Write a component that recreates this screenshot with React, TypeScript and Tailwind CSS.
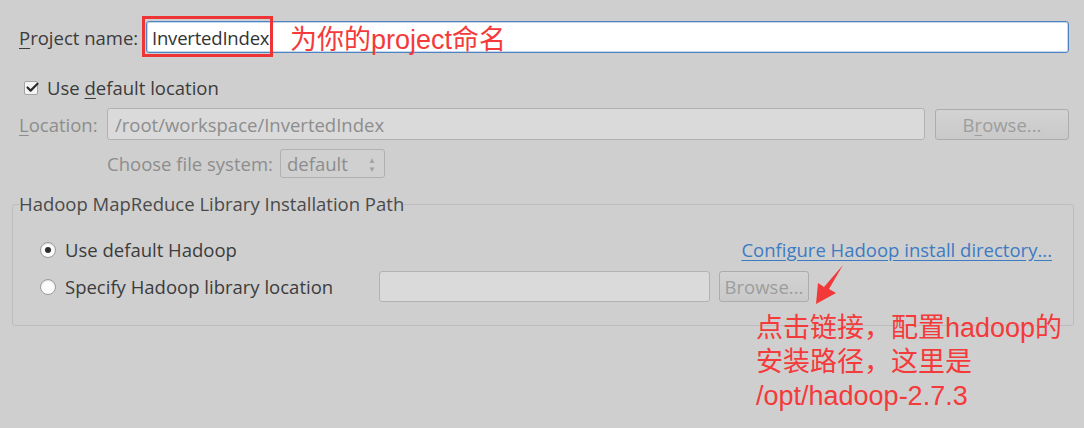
import { Check } from "lucide-react";

const ui = "font-['Open_Sans',sans-serif] text-[18.5px] leading-[27px]";
const note = "font-['Liberation_Sans','Noto_Sans_CJK_SC',sans-serif] text-[#f43a3a]";

function Radio({ checked }: { checked?: boolean }) {
  return (
    <span className="flex h-[16px] w-[16px] items-center justify-center rounded-full border border-[#9b9b9b] bg-[#fbfbfb] shadow-[inset_0_1px_1px_rgba(0,0,0,0.12)]">
      {checked && <span className="h-[6px] w-[6px] rounded-full bg-[#2e2e2e]" />}
    </span>
  );
}

function DisabledButton({ label, wide }: { label: React.ReactNode; wide?: boolean }) {
  return (
    <div
      className={`flex h-[31px] items-center justify-center rounded-[3px] border border-[#acacac] bg-gradient-to-b from-[#d3d3d3] to-[#c9c9c9] text-[#9d9d9d] ${
        wide ? "w-[134px]" : "w-[90px]"
      }`}
    >
      {label}
    </div>
  );
}

export default function App() {
  return (
    <div className={`relative h-[428px] w-[1084px] overflow-hidden bg-[#cfcfcf] text-[#3c3c3c] ${ui}`}>
      <div className="flex flex-col pt-[21px]">
        {/* project name */}
        <div className="flex items-center pl-[19px] pr-[15px]">
          <span className="w-[127px] shrink-0">
            <span className="underline underline-offset-[3px]">P</span>roject name:
          </span>
          <div className="flex h-[32px] flex-1 items-center rounded-[3px] border border-[#4e83c3] bg-white pl-[5px] shadow-[inset_0_0_0_1px_#c5d8ee]">
            <span className="tracking-[-0.2px] text-[#333]">InvertedIndex</span>
            <span className="ml-[1px] h-[19px] w-[1.5px] bg-black" />
          </div>
        </div>

        {/* default location */}
        <div className="mt-[21px] flex items-center pl-[24px]">
          <span className="relative flex h-[14px] w-[14px] items-center justify-center rounded-[2px] border border-[#a4a4a4] bg-[#f4f4f4]">
            <Check className="absolute -top-[2px] left-[0px] h-[15px] w-[15px] text-[#2a2a2a]" strokeWidth={3.4} />
          </span>
          <span className="ml-[9px]">
            Use <span className="underline underline-offset-[3px]">d</span>efault location
          </span>
        </div>

        {/* location */}
        <div className="mt-[7px] flex items-center pl-[19px] pr-[15px] text-[#8d8d8d]">
          <span className="w-[88px] shrink-0">
            <span className="underline underline-offset-[3px]">L</span>ocation:
          </span>
          <div className="flex h-[32px] flex-1 items-center rounded-[3px] border border-[#b2b2b2] bg-[#dadada] pl-[7px]">
            /root/workspace/InvertedIndex
          </div>
          <div className="ml-[10px]">
            <DisabledButton
              wide
              label={
                <span>
                  B<span className="underline underline-offset-[3px]">r</span>owse...
                </span>
              }
            />
          </div>
        </div>

        {/* file system */}
        <div className="mt-[9px] flex items-center pl-[107px] text-[#8d8d8d]">
          <span className="w-[173px] shrink-0">Choose file system:</span>
          <div className="flex h-[29px] w-[105px] items-center justify-between rounded-[3px] border border-[#b0b0b0] bg-[#d0d0d0] pl-[6px] pr-[8px]">
            <span>default</span>
            <span className="flex flex-col items-center text-[8px] leading-[9px] text-[#a3a3a3]">
              <span>▲</span>
              <span>▼</span>
            </span>
          </div>
        </div>

        {/* hadoop group */}
        <fieldset className="mt-[13px] ml-[12px] mr-[10px] rounded-[3px] border border-[#bdbdbd] px-0 pt-[17px] pb-[23px]">
          <legend className="ml-[6px] leading-[26px] text-[#4a4a4a]">
            Hadoop MapReduce Library Installation Path
          </legend>
          <div className="pl-[27px] pr-[21px]">
            <div className="flex h-[31px] items-center justify-between">
              <div className="flex items-center">
                <Radio checked />
                <span className="ml-[9px]">Use default Hadoop</span>
              </div>
              <span className="text-[#3d7bc3] underline underline-offset-[3px]">Configure Hadoop install directory...</span>
            </div>
            <div className="mt-[6px] flex h-[31px] items-center">
              <div className="flex w-[339px] shrink-0 items-center">
                <Radio />
                <span className="ml-[9px]">Specify Hadoop library location</span>
              </div>
              <div className="h-[31px] w-[331px] rounded-[3px] border border-[#b2b2b2] bg-[#dadada]" />
              <div className="ml-[9px]">
                <DisabledButton label="Browse..." />
              </div>
            </div>
          </div>
        </fieldset>
      </div>

      {/* annotations */}
      <div className="absolute left-[142px] top-[16px] h-[41px] w-[131px] border-[3px] border-[#ee3434]" />
      <div className={`absolute left-[290px] top-[24px] text-[27px] leading-[32px] ${note}`}>为你的project命名</div>

      <svg className="absolute left-[810px] top-[260px]" width="40" height="48" viewBox="0 0 40 48">
        <path d="M33 5 L19 29 L26 33 L6 44 L8 23 L14 27 Z" fill="#f23838" />
      </svg>

      <div className={`absolute left-[756px] top-[311px] text-[27px] leading-[34px] ${note}`}>
        <div>点击链接，配置hadoop的</div>
        <div>安装路径，这里是</div>
        <div>/opt/hadoop-2.7.3</div>
      </div>
    </div>
  );
}
